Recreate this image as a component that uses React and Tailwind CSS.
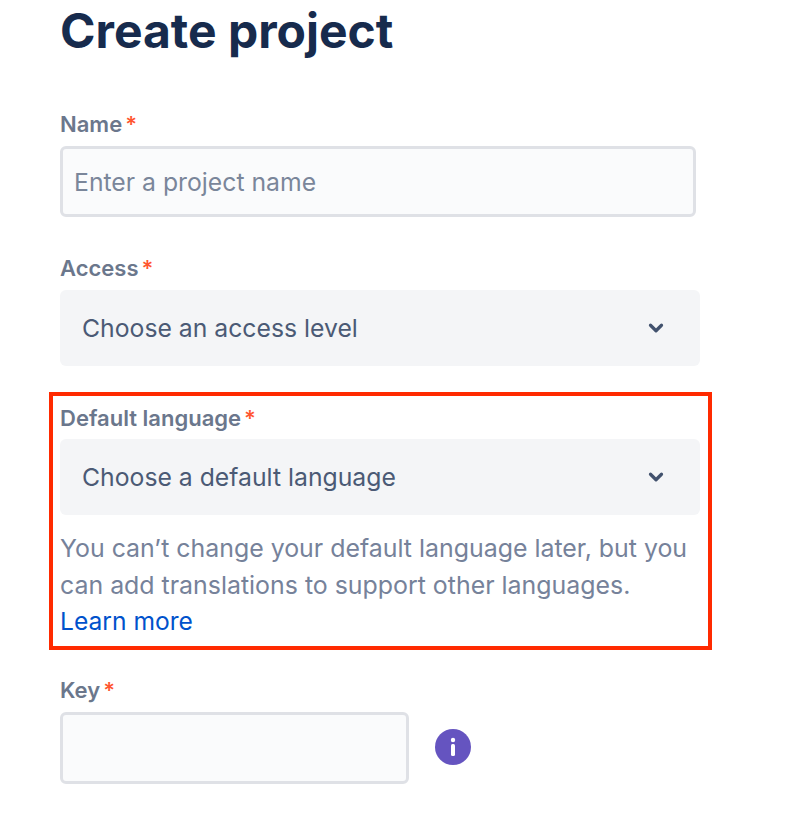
import { ChevronDown } from "lucide-react";

function Label({ text }) {
  return (
    <div className="flex h-[24px] items-center text-[22px] font-semibold leading-[24px] text-[#6b778c]">
      <span>{text}</span>
      <span className="ml-[3px] text-[#ff5630]">*</span>
    </div>
  );
}

function Select({ text }) {
  return (
    <div className="flex h-[76px] w-[640px] items-center justify-between rounded-[6px] bg-[#f4f5f7] pl-[22px] pr-[33px] text-[24.75px] text-[#4b5a75]">
      <span className="pt-[2px]">{text}</span>
      <ChevronDown size={22} strokeWidth={3.5} className="text-[#42526e]" />
    </div>
  );
}

export default function App() {
  return (
    <div className="h-[814px] w-[790px] overflow-hidden bg-white pl-[60px] font-['Inter',sans-serif]">
      <h1 className="mt-[2px] h-[58px] text-[48px] font-bold leading-[58px] text-[#172b4d]">
        Create project
      </h1>

      <div className="mt-[52px]">
        <Label text="Name" />
      </div>
      <div className="mt-[10px] flex h-[71px] w-[636px] items-center rounded-[6px] border-[3px] border-[#dfe1e6] bg-[#fafbfc] pl-[11px] pt-[2px] text-[24.75px] text-[#7a869a]">
        Enter a project name
      </div>

      <div className="mt-[39px]">
        <Label text="Access" />
      </div>
      <div className="mt-[10px]">
        <Select text="Choose an access level" />
      </div>

      <div className="ml-[-11px] mt-[26px] h-[258px] w-[663px] border-[4px] border-[#ff2a00] pl-[7px] pt-[10px]">
        <Label text="Default language" />
        <div className="mt-[9px]">
          <Select text="Choose a default language" />
        </div>
        <p className="mt-[15px] w-[640px] text-[24.9px] leading-[36.5px] text-[#76829a]">
          You can’t change your default language later, but you can add translations to support other languages.
          <br />
          <span className="text-[24.6px] text-[#0052cc]">Learn more</span>
        </p>
      </div>

      <div className="mt-[28px]">
        <Label text="Key" />
      </div>
      <div className="mt-[10px] flex items-center">
        <div className="h-[72px] w-[349px] rounded-[6px] border-[3px] border-[#dfe1e6] bg-[#fafbfc]" />
        <svg className="ml-[26px] mt-[-2px]" width="36" height="36" viewBox="0 0 36 36">
          <circle cx="18" cy="18" r="18" fill="#6554c0" />
          <circle cx="18" cy="11" r="2.2" fill="#fff" />
          <rect x="16" y="15" width="4" height="12" rx="1.5" fill="#fff" />
        </svg>
      </div>
    </div>
  );
}
